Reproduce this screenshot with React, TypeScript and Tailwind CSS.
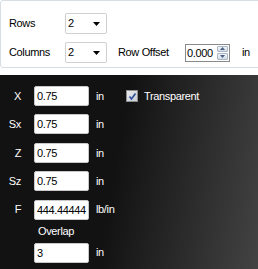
const font = { fontFamily: '"Liberation Sans", Arial, sans-serif' };

function Dropdown({ value }: { value: string }) {
  return (
    <div className="flex h-[21px] w-[42px] items-center justify-between rounded-[2px] border border-[#d0d0d0] bg-white pl-[2px] pr-[6px]">
      <span className="text-black">{value}</span>
      <svg width="7" height="4" viewBox="0 0 7 4">
        <path d="M0 0h7L3.5 4z" fill="#000" />
      </svg>
    </div>
  );
}

function Spinner({ value }: { value: string }) {
  return (
    <div className="flex h-[18px] w-[45px] items-stretch border border-[#8a8a8a] bg-white">
      <span className="flex-1 pl-[1px] leading-[16px] text-black">{value}</span>
      <div className="flex w-[13px] flex-col gap-px p-px">
        <div className="flex flex-1 items-center justify-center rounded-[1px] border border-[#a9b6c6] bg-linear-to-b from-[#f2f5f9] to-[#d3dce7]">
          <svg width="5" height="3" viewBox="0 0 5 3">
            <path d="M0 3h5L2.5 0z" fill="#4a5f82" />
          </svg>
        </div>
        <div className="flex flex-1 items-center justify-center rounded-[1px] border border-[#a9b6c6] bg-linear-to-b from-[#f2f5f9] to-[#d3dce7]">
          <svg width="5" height="3" viewBox="0 0 5 3">
            <path d="M0 0h5L2.5 3z" fill="#4a5f82" />
          </svg>
        </div>
      </div>
    </div>
  );
}

function Field({ value }: { value: string }) {
  return (
    <div className="h-5 w-[55px] overflow-hidden rounded-[2px] border border-[#c8c8c8] bg-white pl-[2px] leading-[18px] whitespace-nowrap text-black">
      {value}
    </div>
  );
}

const rows = [
  { label: 'Sx', value: '0.75', unit: 'in' },
  { label: 'Z', value: '0.75', unit: 'in' },
  { label: 'Sz', value: '0.75', unit: 'in' },
  { label: 'F', value: '444.44444', unit: 'lb/in' },
];

export default function App() {
  return (
    <div
      className="flex h-[269px] w-[258px] flex-col overflow-hidden bg-white text-[11px] tracking-[-0.35px]"
      style={font}
    >
      <div className="mr-[-4px] flex h-[68px] flex-col gap-[8px] rounded-[3px] border border-[#d6dde3] pt-[12px] pl-[8px]">
        <div className="flex items-center">
          <span className="w-[56px] text-black">Rows</span>
          <Dropdown value="2" />
        </div>
        <div className="flex items-center">
          <span className="w-[56px] text-black">Columns</span>
          <Dropdown value="2" />
          <span className="ml-[11px] w-[67px] text-black">Row Offset</span>
          <Spinner value="0.000" />
          <span className="ml-[12px] text-black">in</span>
        </div>
      </div>

      <div className="mt-[7px] flex flex-1 flex-col bg-linear-[100deg] from-[#121212] from-45% to-[#434343] pt-[11px] text-white">
        <div className="flex h-5 items-center">
          <span className="w-[21px] text-right">X</span>
          <div className="ml-[13px]">
            <Field value="0.75" />
          </div>
          <span className="ml-[7px] w-[30px]">in</span>
          <span className="flex h-[12px] w-[12px] items-center justify-center border border-[#8c8c8c] bg-linear-to-br from-[#e8ebef] to-[#c9ced6]">
            <svg width="9" height="9" viewBox="0 0 9 9">
              <path d="M1.5 4.5l2 2.5 4-5.5" fill="none" stroke="#2b4c9c" strokeWidth="1.6" />
            </svg>
          </span>
          <span className="ml-[6px]">Transparent</span>
        </div>
        <div className="mt-[8.4px] flex flex-col gap-[8.4px]">
          {rows.map((r) => (
            <div key={r.label} className="flex h-5 items-center">
              <span className="w-[21px] text-right">{r.label}</span>
              <div className="ml-[13px]">
                <Field value={r.value} />
              </div>
              <span className="ml-[7px]">{r.unit}</span>
            </div>
          ))}
        </div>
        <span className="mt-[5px] ml-[38px] leading-[13px]">Overlap</span>
        <div className="mt-[5px] flex h-5 items-center pl-[34px]">
          <Field value="3" />
          <span className="ml-[7px]">in</span>
        </div>
      </div>
    </div>
  );
}
